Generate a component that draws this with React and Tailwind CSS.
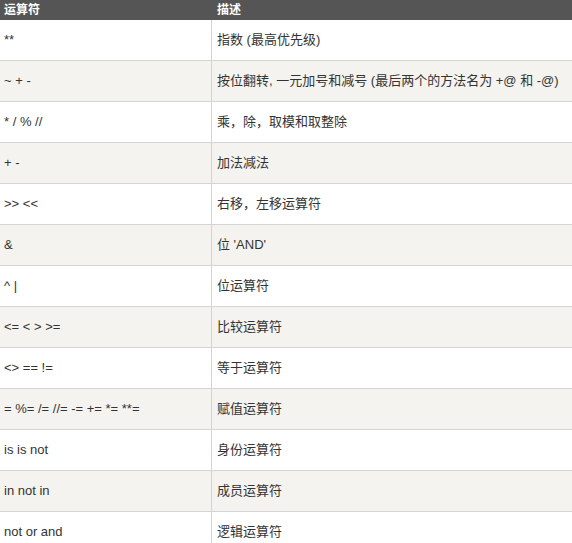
import React from "react";

const rows = [
  ["**", "指数 (最高优先级)"],
  ["~ + -", "按位翻转, 一元加号和减号 (最后两个的方法名为 +@ 和 -@)"],
  ["* / % //", "乘，除，取模和取整除"],
  ["+ -", "加法减法"],
  [">> <<", "右移，左移运算符"],
  ["&", "位 'AND'"],
  ["^ |", "位运算符"],
  ["<= < > >=", "比较运算符"],
  ["<> == !=", "等于运算符"],
  ["= %= /= //= -= += *= **=", "赋值运算符"],
  ["is is not", "身份运算符"],
  ["in not in", "成员运算符"],
  ["not or and", "逻辑运算符"],
];

export default function App() {
  return (
    <div className="w-[572px] h-[543px] overflow-hidden bg-white text-[13px] text-[#333] font-['Liberation_Sans','Noto_Sans_CJK_SC',sans-serif]">
      <div className="grid grid-cols-[212px_1fr] h-[20px] bg-[#555] text-white font-bold text-[12px]">
        <div className="px-[4px] flex items-center">运算符</div>
        <div className="px-[5px] flex items-center">描述</div>
      </div>
      {rows.map(([op, desc], i) => (
        <div
          key={i}
          className={
            "grid grid-cols-[212px_1fr] h-[41px] border-b border-[#d4d4d4] " +
            (i % 2 === 1 ? "bg-[#f4f3ef]" : "bg-white")
          }
        >
          <div className="px-[4px] flex items-center border-r border-[#d4d4d4]">{op}</div>
          <div className="pl-[5px] flex items-center">{desc}</div>
        </div>
      ))}
    </div>
  );
}
